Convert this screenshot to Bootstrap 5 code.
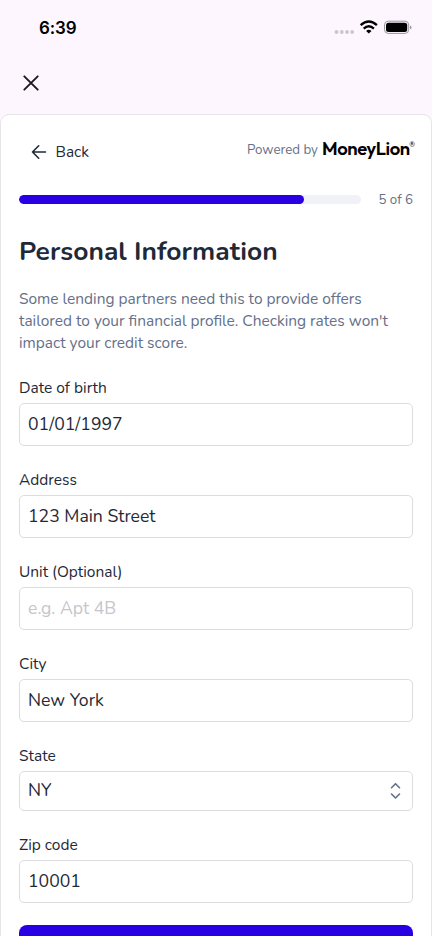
<!DOCTYPE html>
<html lang="en">
<head>
<meta charset="utf-8">
<meta name="viewport" content="width=device-width, initial-scale=1">
<title>Personal Information</title>
<link href="https://cdn.jsdelivr.net/npm/bootstrap@5.3.0/dist/css/bootstrap.min.css" rel="stylesheet">
<style>
  body { font-family: Nunito, Lato, sans-serif; color: #1f2937; background: #fdf6ff; }
  .screen { height: 936px; }
  .status { height: 56px; padding: 0 20px 0 39px; font-family: Inter, sans-serif; color: #000; }
  .clock { font-size: 17px; font-weight: 600; line-height: 24px; letter-spacing: -.1px; }
  .closebar { height: 58px; padding: 18px 22px; }
  .sheet { border: 1px solid #e6e6e8; border-radius: 9px 9px 0 0; padding: 0 18px; }
  .topbar { height: 80px; }
  .back { font-size: 15.4px; line-height: 22px; padding: 26px 0 0 12px; }
  .back svg { margin-right: 8.5px; }
  .powered { font-size: 13.3px; line-height: 20px; color: #64708a; padding-top: 25px; margin-right: -2px; }
  .brand { font-family: Outfit, Poppins, Montserrat, Lato, sans-serif; font-weight: 600; font-size: 18.4px; line-height: 17px; color: #000; letter-spacing: -.42px; }
  .brand sup { font-size: 7px; top: -1.15em; letter-spacing: 0; font-weight: 400; font-family: Lato, sans-serif; margin-left: -.5px; }
  .steps { height: 9px; }
  .steps .progress { height: 9px; width: 341.5px; border-radius: 5px; background: #f1f2f8; }
  .steps .progress-bar { background: #2800e3; border-radius: 5px; }
  .count { font-size: 13.3px; color: #64708a; line-height: 9px; padding-top: 1px; }
  h1 { font-size: 26.4px; font-weight: 700; line-height: 34px; margin: 30px 0 20px; letter-spacing: .05px; }
  .intro { font-size: 15.48px; line-height: 22px; color: #64708a; margin-bottom: 22px; }
  .form-label { display: block; font-size: 15.5px; line-height: 22px; padding-top: 1px; margin-bottom: 4px; }
  .form-control, .form-select { height: 43px; padding: 0 8px; font-size: 17.65px; color: #1f2937; background-color: #fff; border: 1px solid #dcdde0; border-radius: 5px; }
  .form-control { padding-bottom: 1px; }
  .form-control::placeholder { color: #c4c6cb; }
  .form-select { height: 40px; padding-bottom: 1px; background-image: none; }
  .fields { gap: 22px; }
  .chevrons { position: absolute; right: 12px; top: 11px; pointer-events: none; }
  .submit { height: 53px; background: #2800e3; border-radius: 8px; }
</style>
</head>
<body>
<main class="screen d-flex flex-column overflow-hidden">
  <div class="status d-flex align-items-center justify-content-between flex-shrink-0">
    <span class="clock">6:39</span>
    <svg width="78" height="16" viewBox="334 20 78 16" aria-hidden="true">
      <g fill="#cbc5ce"><circle cx="336.5" cy="32" r="1.9"/><circle cx="341.8" cy="32" r="1.9"/><circle cx="347" cy="32" r="1.9"/><circle cx="352.2" cy="32" r="1.9"/></g>
      <g fill="none" stroke="#000" stroke-width="2.4"><path d="M360.7 25.2Q368.8 17.8 376.9 25.2"/><path d="M363.7 28.6Q368.8 24.1 373.9 28.6"/></g>
      <path d="M366.1 31Q368.8 28.600 371.500 31L368.800 33.600Z"/>
      <rect x="384.5" y="21.2" width="24.2" height="12.200" rx="3.7" fill="none" stroke="#99949b"/>
      <rect x="386" y="22.7" width="21.2" height="9.200" rx="2.5"/>
      <path d="M410 25.500Q411.500 26 411.500 27.400T410 29.300Z" fill="#99949b"/>
    </svg>
  </div>
  <div class="closebar flex-shrink-0 d-flex align-items-start">
    <svg width="18" height="18" viewBox="0 0 18 18" fill="none" stroke="#1a1a1c" stroke-width="1.9" stroke-linecap="round"><path d="M2.3 2.3l13.4 13.4M15.7 2.3L2.3 15.7"/></svg>
  </div>
  <section class="sheet bg-white flex-grow-1">
    <div class="topbar d-flex justify-content-between align-items-start">
      <a class="back d-flex align-items-center text-reset text-decoration-none" href="#">
        <svg width="16" height="16" viewBox="0 0 16 16" fill="none" stroke="#1f2937" stroke-width="1.6" stroke-linecap="round" stroke-linejoin="round"><path d="M14.5 8H1.5M7.7 1.8L1.5 8l6.2 6.2"/></svg>
        <span>Back</span>
      </a>
      <div class="powered d-flex gap-1"><span>Powered by</span><span class="brand">MoneyLion<sup>®</sup></span></div>
    </div>
    <div class="steps d-flex align-items-center justify-content-between">
      <div class="progress"><div class="progress-bar" style="width:83.33%"></div></div>
      <span class="count">5 of 6</span>
    </div>
    <h1>Personal Information</h1>
    <p class="intro">Some lending partners need this to provide offers<br>tailored to your financial profile. Checking rates won't<br>impact your credit score.</p>
    <form class="fields d-flex flex-column">
      <div><label class="form-label" for="dob">Date of birth</label><input class="form-control" id="dob" value="01/01/1997"></div>
      <div><label class="form-label" for="address">Address</label><input class="form-control" id="address" value="123 Main Street"></div>
      <div><label class="form-label" for="unit">Unit (Optional)</label><input class="form-control" id="unit" placeholder="e.g. Apt 4B"></div>
      <div><label class="form-label" for="city">City</label><input class="form-control" id="city" value="New York"></div>
      <div><label class="form-label" for="state">State</label>
        <div class="position-relative">
          <select class="form-select" id="state"><option>NY</option></select>
          <svg class="chevrons" width="11" height="18" viewBox="0 0 11 18" fill="none" stroke="#64708a" stroke-width="1.6" stroke-linecap="round" stroke-linejoin="round"><path d="M1.5 5.7l4-4 4 4M1.5 12l4 4 4-4"/></svg>
        </div>
      </div>
      <div><label class="form-label" for="zip">Zip code</label><input class="form-control" id="zip" value="10001"></div>
      <button class="submit btn border-0 w-100" type="button" aria-label="Continue"></button>
    </form>
  </section>
</main>
<script src="https://cdn.jsdelivr.net/npm/bootstrap@5.3.0/dist/js/bootstrap.bundle.min.js"></script>
</body>
</html>
